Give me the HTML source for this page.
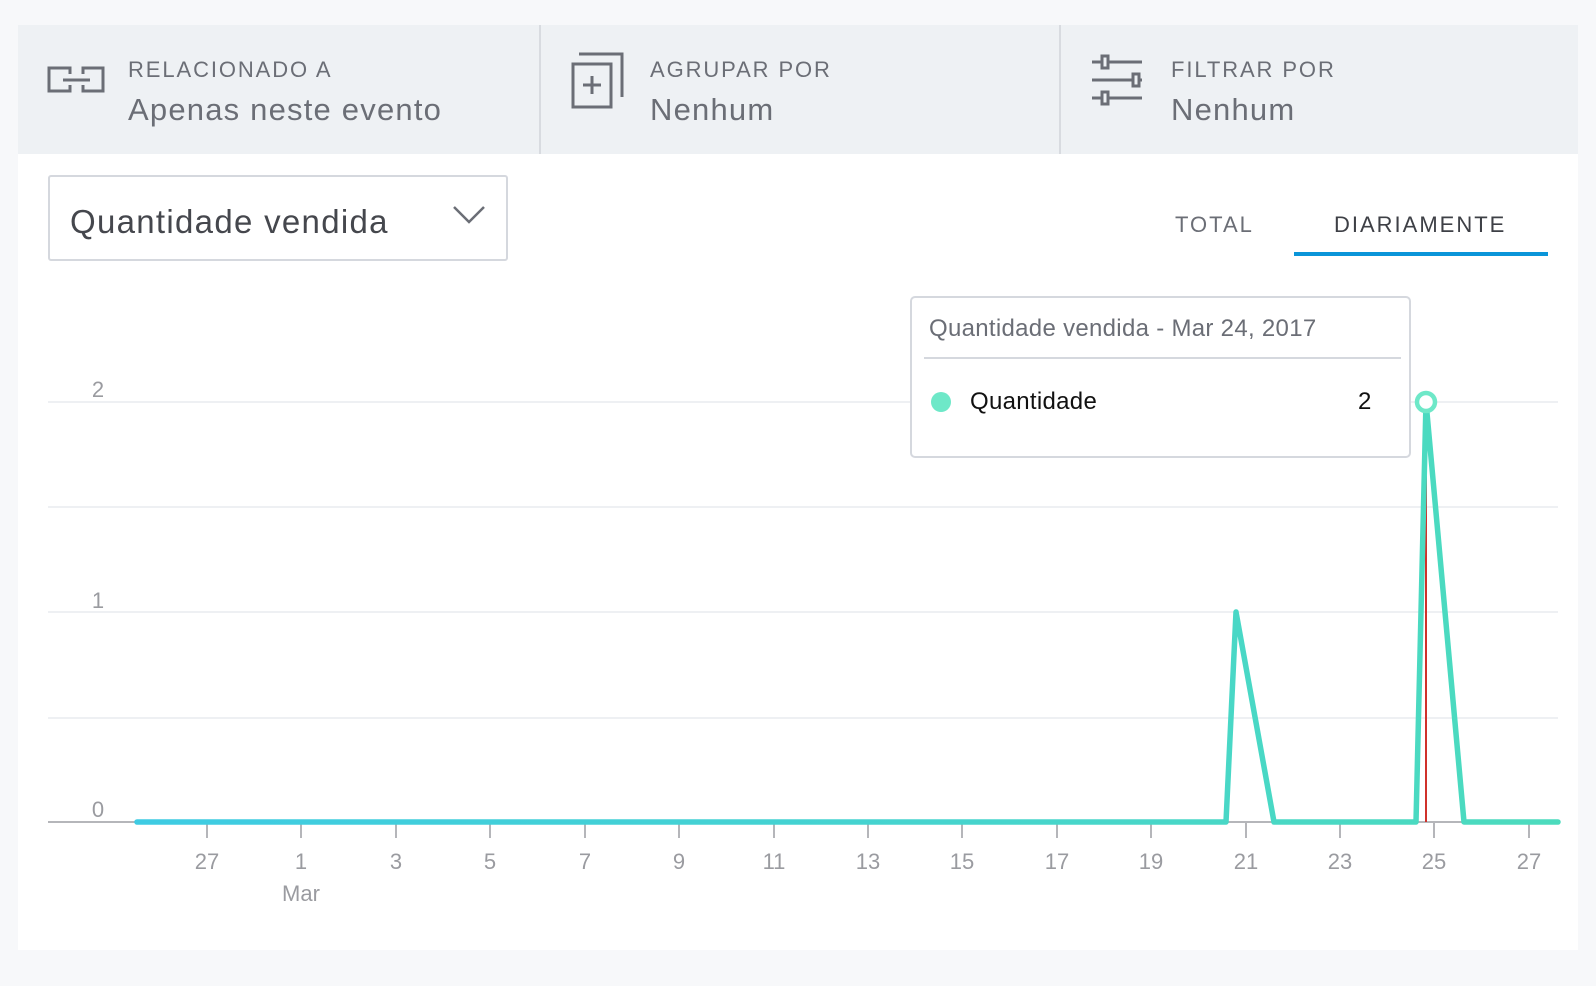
<!DOCTYPE html>
<html><head><meta charset="utf-8"><style>
*{margin:0;padding:0;box-sizing:border-box}
body{width:1596px;height:986px;background:#f7f8fa;font-family:"Liberation Sans",sans-serif;position:relative;overflow:hidden}
.card{position:absolute;left:18px;top:25px;width:1560px;height:925px;background:#fff}
.hdr{position:absolute;left:0;top:0;width:1560px;height:129px;background:#eef1f4}
.div{position:absolute;top:0;width:2px;height:129px;background:#d8dbe0}
.lab{position:absolute;font-size:22px;letter-spacing:1.9px;color:#6b6e76}
.val{position:absolute;font-size:31px;letter-spacing:1.2px;color:#6b6e76}
.abs{position:absolute}
</style></head><body>
<div class="card">
<div class="hdr"></div>
<div class="div" style="left:521px"></div>
<div class="div" style="left:1041px"></div>
</div>
<svg class="abs" style="left:0;top:0" width="1596" height="986">
<g fill="none" stroke="#6b6e76" stroke-width="3">
<path d="M70 74V68H49V91H70V85"/><path d="M83 74V68H103V91H83V85"/><path d="M63 80H90"/>
<rect x="573" y="64" width="38" height="43"/><path d="M579 54H622V97"/><path d="M583 85H601M592 76V94"/>
<path d="M1092 62H1142M1092 80H1142M1092 98H1142" stroke-width="3"/>
<rect x="1102" y="56" width="6" height="12" fill="#eef1f4"/><rect x="1133" y="74" width="6" height="12" fill="#eef1f4"/><rect x="1102" y="92" width="6" height="12" fill="#eef1f4"/>
</g>
</svg>
<div class="lab" style="left:128px;top:57px">RELACIONADO A</div>
<div class="val" style="left:128px;top:92px">Apenas neste evento</div>
<div class="lab" style="left:650px;top:57px">AGRUPAR POR</div>
<div class="val" style="left:650px;top:92px">Nenhum</div>
<div class="lab" style="left:1171px;top:57px">FILTRAR POR</div>
<div class="val" style="left:1171px;top:92px">Nenhum</div>

<div class="abs" style="left:48px;top:175px;width:460px;height:86px;border:2px solid #d5d8de;border-radius:3px"></div>
<div class="abs" style="left:70px;top:203px;font-size:33px;letter-spacing:1.3px;color:#45474d">Quantidade vendida</div>
<svg class="abs" style="left:450px;top:200px" width="40" height="30"><path d="M4 7L19 22L34 7" fill="none" stroke="#6b6e76" stroke-width="2.5"/></svg>

<div class="abs" style="left:1175px;top:212px;font-size:22px;letter-spacing:2px;color:#6b6e76">TOTAL</div>
<div class="abs" style="left:1334px;top:212px;font-size:22px;letter-spacing:2px;color:#3e4046">DIARIAMENTE</div>
<div class="abs" style="left:1294px;top:252px;width:254px;height:4px;background:#0a95d9"></div>

<svg class="abs" style="left:0;top:0" width="1596" height="986" font-family="Liberation Sans,sans-serif">
<defs><linearGradient id="g" x1="137" x2="1558" gradientUnits="userSpaceOnUse"><stop offset="0" stop-color="#3ecbe3"/><stop offset="1" stop-color="#4cdbbd"/></linearGradient></defs>
<g stroke="#eef0f3" stroke-width="2">
<path d="M48 402H1558M48 507H1558M48 612H1558M48 718H1558"/></g>
<path d="M48 822H1558" stroke="#b5b6ba" stroke-width="2"/>
<g fill="#9a9ba0" font-size="22" text-anchor="middle">
<text x="98" y="397">2</text><text x="98" y="608">1</text><text x="98" y="817">0</text>
</g>
<g stroke="#b5b6ba" stroke-width="2">
<path d="M207 822v16M301 822v16M396 822v16M490 822v16M585 822v16M679 822v16M774 822v16M868 822v16M962 822v16M1057 822v16M1151 822v16M1246 822v16M1340 822v16M1434 822v16M1529 822v16"/></g>
<g fill="#9a9ba0" font-size="22" text-anchor="middle">
<text x="207" y="869">27</text><text x="301" y="869">1</text><text x="396" y="869">3</text><text x="490" y="869">5</text><text x="585" y="869">7</text><text x="679" y="869">9</text><text x="774" y="869">11</text><text x="868" y="869">13</text><text x="962" y="869">15</text><text x="1057" y="869">17</text><text x="1151" y="869">19</text><text x="1246" y="869">21</text><text x="1340" y="869">23</text><text x="1434" y="869">25</text><text x="1529" y="869">27</text>
<text x="301" y="901">Mar</text>
</g>
<path d="M1426 402V822" stroke="#d0312b" stroke-width="2"/>
<polyline points="137,822 1226,822 1236,612 1274,822 1416,822 1426,402 1464,822 1558,822" fill="none" stroke="url(#g)" stroke-width="5.5" stroke-linejoin="round" stroke-linecap="round"/>
<circle cx="1426" cy="402" r="9" fill="#fff" stroke="#6ee8c8" stroke-width="4.5"/>
</svg>

<div class="abs" style="left:910px;top:296px;width:501px;height:162px;border:2px solid #d5d8de;border-radius:5px;background:#fff"></div>
<div class="abs" style="left:929px;top:315px;font-size:24px;letter-spacing:0.3px;color:#6b6e76">Quantidade vendida - Mar 24, 2017</div>
<div class="abs" style="left:924px;top:357px;width:477px;height:2px;background:#d5d8de"></div>
<div class="abs" style="left:931px;top:392px;width:20px;height:20px;border-radius:50%;background:#6ee8c8"></div>
<div class="abs" style="left:970px;top:388px;font-size:24px;letter-spacing:0.3px;color:#111">Quantidade</div>
<div class="abs" style="left:1358px;top:388px;font-size:24px;color:#111">2</div>
</body></html>
